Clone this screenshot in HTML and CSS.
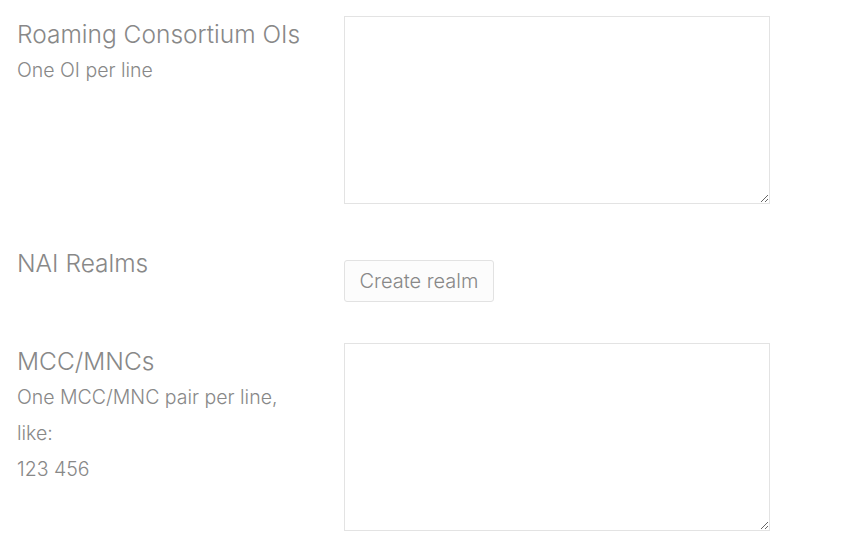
FILE: index.html
```html
<!DOCTYPE html>
<html>
<head>
<meta charset="utf-8">
<link rel="stylesheet" href="styles.css">
</head>
<body>
<form class="form">
  <div class="row">
    <div class="label">
      <div class="title">Roaming Consortium OIs</div>
      <div class="hint">One OI per line</div>
    </div>
    <div class="field"><textarea class="area"></textarea></div>
  </div>
  <div class="row">
    <div class="label">
      <div class="title">NAI Realms</div>
    </div>
    <div class="field"><button type="button" class="btn">Create realm</button></div>
  </div>
  <div class="row">
    <div class="label">
      <div class="title">MCC/MNCs</div>
      <div class="hint">One MCC/MNC pair per line, like:<br>123 456</div>
    </div>
    <div class="field"><textarea class="area"></textarea></div>
  </div>
</form>
</body>
</html>
```
FILE: styles.css
```css
html, body {
  margin: 0;
  background: #fff;
}
body {
  font-family: Inter, "Noto Sans", sans-serif;
  font-weight: 300;
  color: #888;
  padding: 16px 17px;
}
.form {
  display: flex;
  flex-direction: column;
  gap: 41px;
}
.row {
  display: grid;
  grid-template-columns: 292px 426px;
  column-gap: 35px;
  align-items: start;
}
.title {
  font-size: 24.5px;
  line-height: 36px;
  white-space: nowrap;
}
.hint {
  font-size: 19.5px;
  line-height: 36px;
}
.field {
  display: flex;
}
.area {
  display: block;
  width: 426px;
  height: 188px;
  box-sizing: border-box;
  margin: 0;
  border: 1px solid #e3e3e3;
  background: #fff;
  border-radius: 0;
  resize: vertical;
  font-family: inherit;
}
.btn {
  margin-top: 15px;
  height: 42px;
  width: 150px;
  box-sizing: border-box;
  border: 1px solid #e2e2e2;
  border-radius: 3px;
  background: #fcfcfc;
  color: #888;
  font-family: inherit;
  font-weight: 300;
  font-size: 20px;
  padding: 0;
}
```
